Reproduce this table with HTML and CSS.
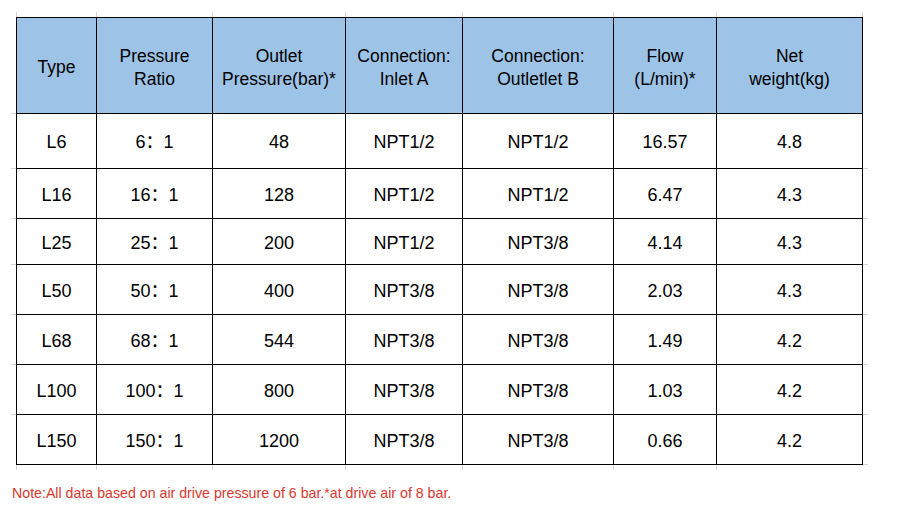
FILE: index.html
```html
<!DOCTYPE html>
<html>
<head>
<meta charset="utf-8">
<link rel="stylesheet" href="styles.css">
</head>
<body>
<div class="page">
  <table class="spec">
    <colgroup>
      <col class="c1"><col class="c2"><col class="c3"><col class="c4"><col class="c5"><col class="c6"><col class="c7">
    </colgroup>
    <thead>
      <tr class="head">
        <th>Type</th>
        <th>Pressure<br>Ratio</th>
        <th>Outlet<br>Pressure(bar)*</th>
        <th>Connection:<br>Inlet A</th>
        <th>Connection:<br>Outletlet B</th>
        <th>Flow<br>(L/min)*</th>
        <th>Net<br>weight(kg)</th>
      </tr>
    </thead>
    <tbody>
      <tr class="r55"><td>L6</td><td>6：1</td><td>48</td><td>NPT1/2</td><td>NPT1/2</td><td>16.57</td><td>4.8</td></tr>
      <tr class="r50"><td>L16</td><td>16：1</td><td>128</td><td>NPT1/2</td><td>NPT1/2</td><td>6.47</td><td>4.3</td></tr>
      <tr class="r46"><td>L25</td><td>25：1</td><td>200</td><td>NPT1/2</td><td>NPT3/8</td><td>4.14</td><td>4.3</td></tr>
      <tr class="r50"><td>L50</td><td>50：1</td><td>400</td><td>NPT3/8</td><td>NPT3/8</td><td>2.03</td><td>4.3</td></tr>
      <tr class="r50"><td>L68</td><td>68：1</td><td>544</td><td>NPT3/8</td><td>NPT3/8</td><td>1.49</td><td>4.2</td></tr>
      <tr class="r50"><td>L100</td><td>100：1</td><td>800</td><td>NPT3/8</td><td>NPT3/8</td><td>1.03</td><td>4.2</td></tr>
      <tr class="r50 last"><td>L150</td><td>150：1</td><td>1200</td><td>NPT3/8</td><td>NPT3/8</td><td>0.66</td><td>4.2</td></tr>
    </tbody>
  </table>
  <p class="note">Note:All data based on air drive pressure of 6 bar.*at drive air of 8 bar.</p>
</div>
</body>
</html>
```

FILE: styles.css
```css
html, body {
  margin: 0;
  padding: 0;
  background: #ffffff;
}

.page {
  padding: 17px 0 0 16px;
  font-family: "Liberation Sans", Arial, "Noto Sans CJK SC", sans-serif;
  color: #000;
}

.spec {
  border-collapse: collapse;
  table-layout: fixed;
  width: 846px;
}

.c1 { width: 80px; }
.c2 { width: 116px; }
.c3 { width: 133px; }
.c4 { width: 117px; }
.c5 { width: 151px; }
.c6 { width: 103px; }
.c7 { width: 146px; }

.spec th,
.spec td {
  border: 1px solid #000;
  padding: 2px 0 0 0;
  text-align: center;
  vertical-align: middle;
  position: relative;
}

.spec th {
  background: #9dc3e6;
  font-weight: normal;
  font-size: 17.5px;
  line-height: 23px;
  padding-top: 4px;
}

.spec td {
  font-size: 18px;
  line-height: 20px;
}

.head { height: 96px; }
.r55 { height: 55px; }
.r50 { height: 50px; }
.r46 { height: 46px; }

/* faint spreadsheet gridline ticks outside the table */
.spec th::before {
  content: "";
  position: absolute;
  top: -6px;
  left: -1px;
  width: 1px;
  height: 5px;
  background: #d6d6d6;
}

.spec th:last-child::after {
  content: "";
  position: absolute;
  top: -6px;
  right: -1px;
  width: 1px;
  height: 5px;
  background: #d6d6d6;
}

.spec tr > :first-child::after {
  content: "";
  position: absolute;
  left: -6px;
  bottom: -1px;
  width: 5px;
  height: 1px;
  background: #d6d6d6;
}

.spec tr > td:last-child::before {
  content: "";
  position: absolute;
  right: -6px;
  bottom: -1px;
  width: 5px;
  height: 1px;
  background: #d6d6d6;
}

.spec .last td::after {
  content: "";
  position: absolute;
  left: -1px;
  bottom: -6px;
  width: 1px;
  height: 5px;
  background: #d6d6d6;
}

.note {
  margin: 20px 0 0 -4px;
  font-size: 14.2px;
  line-height: 16px;
  color: #d9382e;
}
```
